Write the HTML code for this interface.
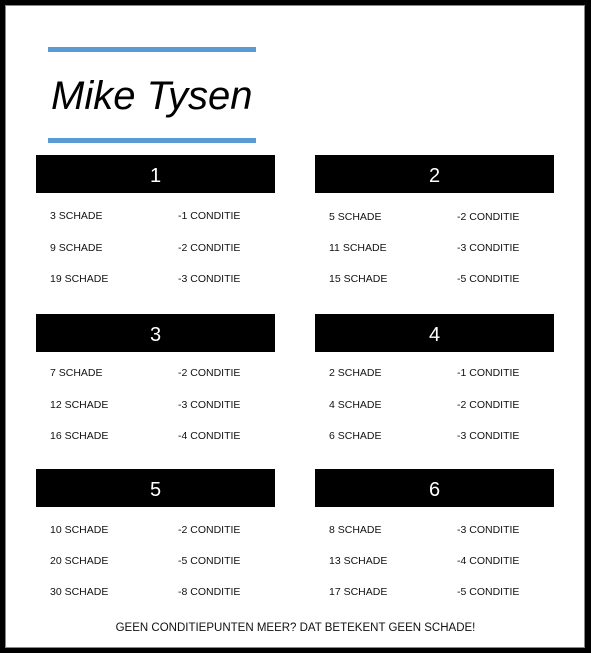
<!DOCTYPE html>
<html><head><meta charset="utf-8"><style>
html,body{margin:0;padding:0;}
body{width:591px;height:653px;position:relative;background:#000;overflow:hidden;font-family:"Liberation Sans",sans-serif;}
.page{position:absolute;left:5px;top:5px;width:580px;height:643px;background:#fff;box-shadow:inset 0 0 0 1px #888;}
.bl{position:absolute;left:48px;width:208px;height:5px;background:#5b9bd5;}
.title{position:absolute;left:51px;top:74px;font-size:40px;font-style:italic;color:#000;font-family:"Liberation Sans",sans-serif;}
.bar{position:absolute;width:239px;height:38px;background:#000;color:#fff;text-align:center;line-height:42px;font-size:20px;}
.t{position:absolute;font-size:10.5px;color:#111;line-height:12px;margin-top:2px;}
.foot{position:absolute;left:0;width:591px;text-align:center;top:622px;font-size:11.5px;color:#111;}
</style></head><body>
<div class="page"></div>
<div class="bl" style="top:47px"></div>
<div class="title">Mike Tysen</div>
<div class="bl" style="top:138px"></div>

<div class="bar" style="left:36px;top:155px">1</div>
<div class="bar" style="left:315px;top:155px">2</div>
<div class="bar" style="left:36px;top:314px">3</div>
<div class="bar" style="left:315px;top:314px">4</div>
<div class="bar" style="left:36px;top:469px">5</div>
<div class="bar" style="left:315px;top:469px">6</div>

<div class="t" style="left:50px;top:208px">3 SCHADE</div><div class="t" style="left:178px;top:208px">-1 CONDITIE</div>
<div class="t" style="left:50px;top:240px">9 SCHADE</div><div class="t" style="left:178px;top:240px">-2 CONDITIE</div>
<div class="t" style="left:50px;top:271px">19 SCHADE</div><div class="t" style="left:178px;top:271px">-3 CONDITIE</div>

<div class="t" style="left:329px;top:209px">5 SCHADE</div><div class="t" style="left:457px;top:209px">-2 CONDITIE</div>
<div class="t" style="left:329px;top:240px">11 SCHADE</div><div class="t" style="left:457px;top:240px">-3 CONDITIE</div>
<div class="t" style="left:329px;top:271px">15 SCHADE</div><div class="t" style="left:457px;top:271px">-5 CONDITIE</div>

<div class="t" style="left:50px;top:365px">7 SCHADE</div><div class="t" style="left:178px;top:365px">-2 CONDITIE</div>
<div class="t" style="left:50px;top:397px">12 SCHADE</div><div class="t" style="left:178px;top:397px">-3 CONDITIE</div>
<div class="t" style="left:50px;top:428px">16 SCHADE</div><div class="t" style="left:178px;top:428px">-4 CONDITIE</div>

<div class="t" style="left:329px;top:365px">2 SCHADE</div><div class="t" style="left:457px;top:365px">-1 CONDITIE</div>
<div class="t" style="left:329px;top:397px">4 SCHADE</div><div class="t" style="left:457px;top:397px">-2 CONDITIE</div>
<div class="t" style="left:329px;top:428px">6 SCHADE</div><div class="t" style="left:457px;top:428px">-3 CONDITIE</div>

<div class="t" style="left:50px;top:522px">10 SCHADE</div><div class="t" style="left:178px;top:522px">-2 CONDITIE</div>
<div class="t" style="left:50px;top:553px">20 SCHADE</div><div class="t" style="left:178px;top:553px">-5 CONDITIE</div>
<div class="t" style="left:50px;top:584px">30 SCHADE</div><div class="t" style="left:178px;top:584px">-8 CONDITIE</div>

<div class="t" style="left:329px;top:522px">8 SCHADE</div><div class="t" style="left:457px;top:522px">-3 CONDITIE</div>
<div class="t" style="left:329px;top:553px">13 SCHADE</div><div class="t" style="left:457px;top:553px">-4 CONDITIE</div>
<div class="t" style="left:329px;top:584px">17 SCHADE</div><div class="t" style="left:457px;top:584px">-5 CONDITIE</div>

<div class="foot">GEEN CONDITIEPUNTEN MEER? DAT BETEKENT GEEN SCHADE!</div>
</body></html>
